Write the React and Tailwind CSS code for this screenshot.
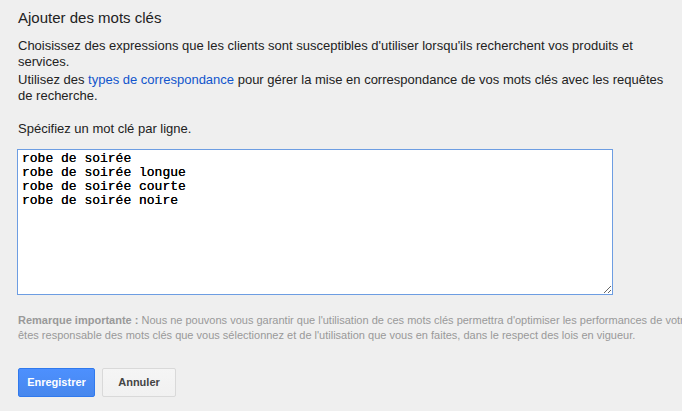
import { useState } from "react";

function App() {
  const [keywords, setKeywords] = useState(
    "robe de soirée\nrobe de soirée longue\nrobe de soirée courte\nrobe de soirée noire"
  );

  return (
    <div
      className="w-[682px] h-[411px] overflow-hidden bg-[#efefef] text-[#222] px-[18px]"
      style={{ fontFamily: "'Liberation Sans', Arial, sans-serif" }}
    >
      <h2 className="text-[15px] leading-[18px] pt-[9px] mb-[11px]">Ajouter des mots clés</h2>

      <p className="text-[13px] leading-[16px] w-[650px]">
        Choisissez des expressions que les clients sont susceptibles d'utiliser lorsqu'ils recherchent vos produits et services.
      </p>
      <p className="text-[13px] leading-[16px] w-[650px] mt-[2px]">
        Utilisez des <a className="text-[#1155cc]">types de correspondance</a> pour gérer la mise en correspondance de vos mots clés avec les requêtes de recherche.
      </p>

      <p className="text-[13px] leading-[16px] mt-[17px]">Spécifiez un mot clé par ligne.</p>

      <textarea
        value={keywords}
        onChange={(e) => setKeywords(e.target.value)}
        className="block mt-[12px] -ml-px w-[596px] h-[146px] bg-white border border-[#6d9de2] pl-[4px] pr-[4px] py-[2px] text-[13px] leading-[14px] text-black outline-none resize [text-shadow:0_0_0.4px_#000]"
        style={{ fontFamily: "'Liberation Mono', 'Courier New', monospace" }}
      />

      <div className="mt-[18px] text-[11px] leading-[15px] text-[#999] whitespace-nowrap">
        <div>
          <span className="font-bold">Remarque importante :</span> Nous ne pouvons vous garantir que l'utilisation de ces mots clés permettra d'optimiser les performances de votre campagne. Vous
        </div>
        <div>êtes responsable des mots clés que vous sélectionnez et de l'utilisation que vous en faites, dans le respect des lois en vigueur.</div>
      </div>

      <div className="flex gap-[7px] mt-[25px]">
        <button className="w-[77px] h-[29px] rounded-[2px] border border-[#3079ed] bg-gradient-to-b from-[#4d90fe] to-[#4787ed] text-white text-[11px] font-bold">
          Enregistrer
        </button>
        <button className="w-[74px] h-[29px] rounded-[2px] border border-[#d9d9d9] bg-gradient-to-b from-[#f5f5f5] to-[#f1f1f1] text-[#444] text-[11px] font-bold">
          Annuler
        </button>
      </div>
    </div>
  );
}

export default App;
